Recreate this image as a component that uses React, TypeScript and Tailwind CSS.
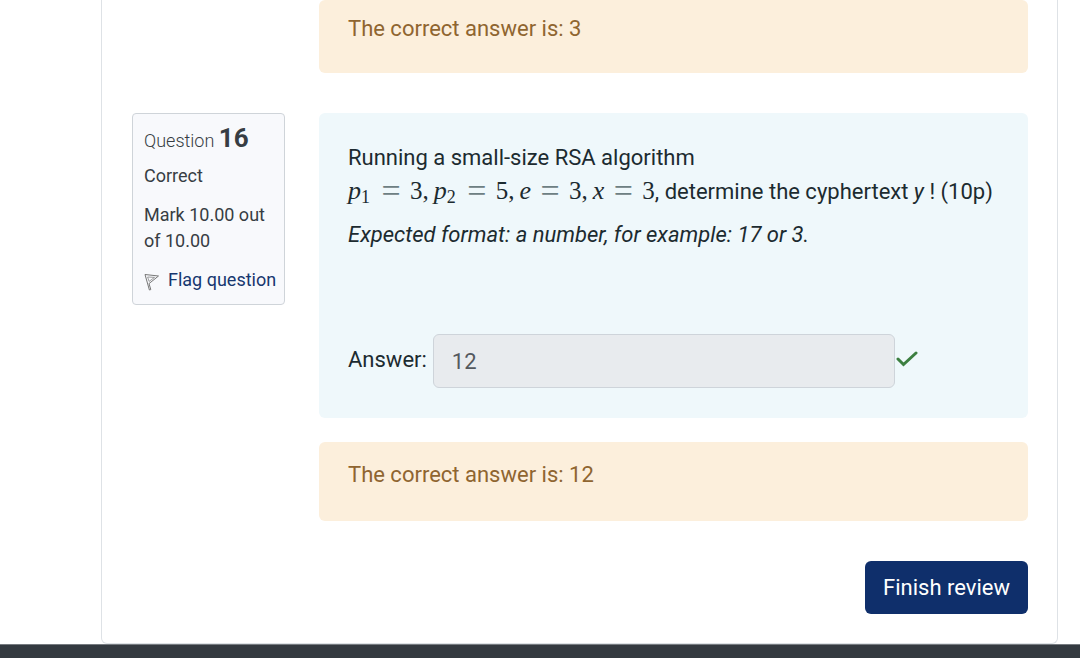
import React from "react";

function Eq() {
  return <span className="mx-[9px] w-5 self-center text-center font-['Liberation_Serif',serif] text-[34px] leading-none text-[#6d8083]">=</span>;
}

function Num({ children }: { children: React.ReactNode }) {
  return <span className="font-['Liberation_Serif',serif] text-[25px]">{children}</span>;
}

function Comma() {
  return <span className="mr-[5px] font-['Liberation_Serif',serif] text-[25px]">,</span>;
}

function Var({ name, sub }: { name: string; sub?: string }) {
  return (
    <span className="font-['Liberation_Serif',serif] text-[26px]">
      <i>{name}</i>
      {sub && <sub className="bottom-[-4px] mr-0.5 text-lg">{sub}</sub>}
    </span>
  );
}

function Feedback({ children, className }: { children: React.ReactNode; className: string }) {
  return <div className={`rounded-md bg-[#fcefdc] px-[29px] text-[#8f6530] ${className}`}>{children}</div>;
}

function QuestionInfo() {
  return (
    <aside className="flex w-[153px] shrink-0 flex-col gap-3 self-start rounded-sm border border-[#cfd4d9] bg-[#f8f9fc] px-[11px] pt-[11px] pb-[11px] text-lg leading-[27px] text-[#373d43]">
      <h2 className="-mb-1 font-light">
        Question <span className="text-[26px] font-bold">16</span>
      </h2>
      <p className="leading-7">Correct</p>
      <p className="leading-[26px]">Mark 10.00 out of 10.00</p>
      <a href="#flag" className="flex items-center gap-2 whitespace-nowrap text-[#17376f]">
        <svg className="mt-1 h-[18px] w-4 shrink-0" viewBox="0 0 16 18" fill="none" stroke="#777" strokeLinejoin="round" aria-hidden="true">
          <path d="M1 1.5 5.4 17l1.4-.4L5 10.6 14.5 3 1 1.5Z" />
          <path d="m3.6 4 1.5 4.4 5.4-4Z" strokeWidth=".7" />
        </svg>
        Flag question
      </a>
    </aside>
  );
}

export default function App() {
  return (
    <div className="flex min-h-screen flex-col bg-white font-[Roboto,sans-serif] text-[22px] leading-[33px] text-[#1c2b30]">
      <main className="mr-[22px] ml-[101px] rounded-b-md border border-t-0 border-[#dee2e6] pr-[29px] pb-[29px] pl-[30px]">
        <Feedback className="ml-[187px] pt-3 pb-7">The correct answer is: 3</Feedback>

        <section className="mt-10 flex gap-[34px]">
          <QuestionInfo />
          <div className="min-w-0 flex-1">
            <div className="rounded-md bg-[#eff8fb] px-[29px] pt-7 pb-[30px]">
              <p>Running a small-size RSA algorithm</p>
              <p className="flex h-[33px] items-baseline whitespace-nowrap">
                <Var name="p" sub="1" />
                <Eq />
                <Num>3</Num>
                <Comma />
                <Var name="p" sub="2" />
                <Eq />
                <Num>5</Num>
                <Comma />
                <Var name="e" />
                <Eq />
                <Num>3</Num>
                <Comma />
                <Var name="x" />
                <Eq />
                <Num>3</Num>
                <span>, determine the cyphertext <i>y</i> ! (10p)</span>
              </p>
              <p className="mt-[11px] italic">Expected format: a number, for example: 17 or 3.</p>
              <div className="mt-[83px] flex items-center">
                <label htmlFor="answer" className="mr-[6px] -mt-1">Answer:</label>
                <input id="answer" readOnly value="12" className="h-[54px] w-[462px] rounded-md border border-[#ced4da] bg-[#e8ebee] px-[18px] text-[#54595e]" />
                <svg className="mb-1 ml-px h-4 w-[22px]" viewBox="0 0 22 16" fill="none" stroke="#3c7f40" strokeWidth="3" strokeLinecap="round" role="img" aria-label="Correct">
                  <path d="m2 8 5.5 5.5L20 2" />
                </svg>
              </div>
            </div>
            <Feedback className="mt-6 pt-4 pb-[30px]">The correct answer is: 12</Feedback>
          </div>
        </section>

        <div className="mt-10 flex justify-end">
          <button type="button" className="h-[53px] rounded-md bg-[#0f2f6b] px-[18px] text-white">Finish review</button>
        </div>
      </main>
      <footer className="flex-1 border-t border-[#767b80] bg-[#343a40]" />
    </div>
  );
}
